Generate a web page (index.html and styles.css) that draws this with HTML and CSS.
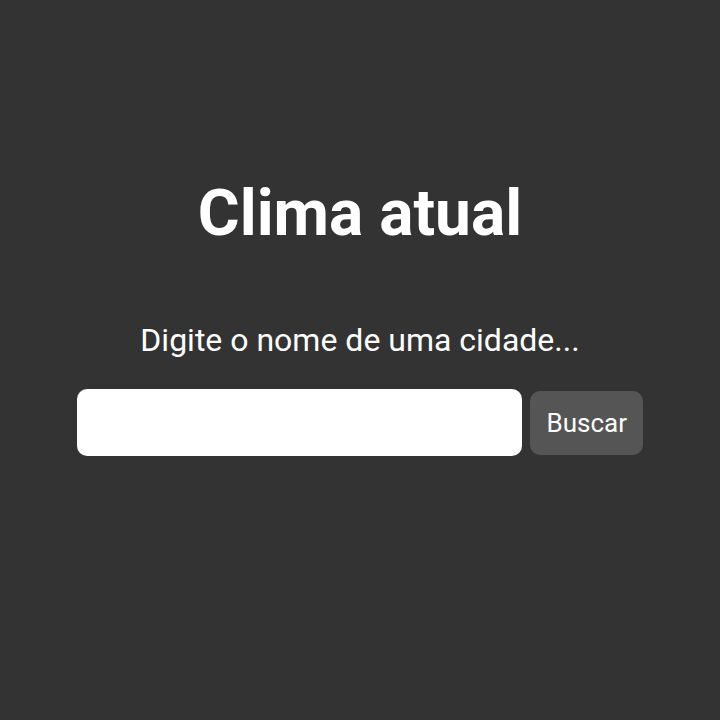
FILE: index.html
```html
<!DOCTYPE html>
<html lang="pt-BR">
<head>
  <meta charset="UTF-8">
  <meta name="viewport" content="width=device-width, initial-scale=1">
  <title>Clima atual</title>
  <link rel="stylesheet" href="styles.css">
</head>
<body>
  <main class="weather">
    <h1 class="title">Clima atual</h1>
    <form class="search">
      <label class="search-label" for="city">Digite o nome de uma cidade...</label>
      <div class="search-row">
        <input class="search-input" id="city" type="text" name="city">
        <button class="search-button" type="submit">Buscar</button>
      </div>
    </form>
  </main>
</body>
</html>
```

FILE: styles.css
```css
* {
  box-sizing: border-box;
}

body {
  margin: 0;
  min-height: 100vh;
  display: flex;
  align-items: center;
  justify-content: center;
  background: #333;
  color: #fff;
  font-family: Roboto, sans-serif;
}

.weather {
  width: 100%;
  max-width: 598px;
  padding: 0 16px 88px;
  text-align: center;
}

.title {
  margin: 0 0 69px;
  font-size: 64px;
  font-weight: 700;
  line-height: 76px;
}

.search-label {
  display: block;
  margin-bottom: 30px;
  font-size: 32px;
  line-height: 38px;
}

.search-row {
  display: flex;
  align-items: center;
  gap: 8px;
}

.search-input {
  flex: 1;
  min-width: 0;
  padding: 16px;
  border: 0;
  border-radius: 10px;
  background: #fff;
  color: #333;
  font: inherit;
  font-size: 29px;
  line-height: 35px;
}

.search-button {
  padding: 16px;
  border: 0;
  border-radius: 10px;
  background: #555;
  color: #fff;
  font: inherit;
  font-size: 26px;
  line-height: 32px;
  cursor: pointer;
}
```
